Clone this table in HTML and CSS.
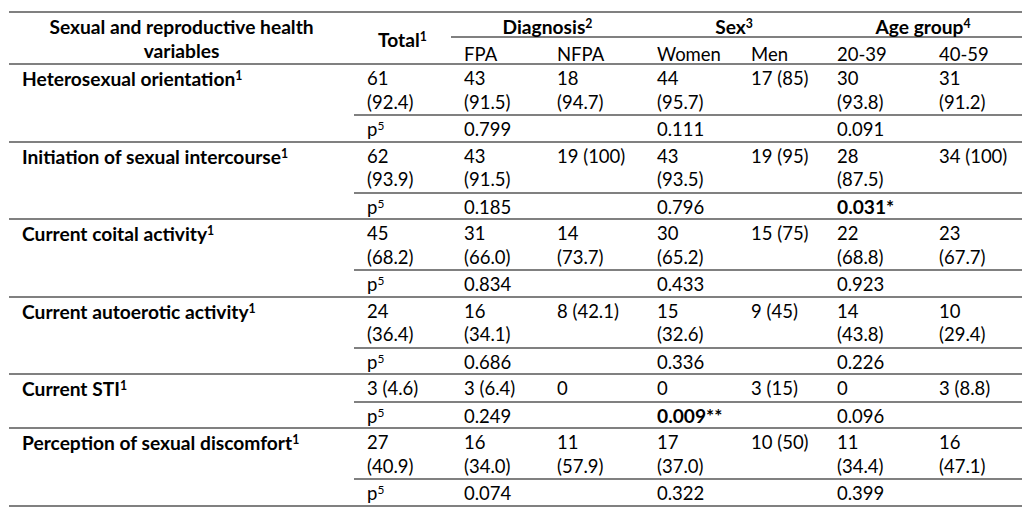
FILE: index.html
```html
<!DOCTYPE html>
<html>
<head>
<meta charset="utf-8">
<link rel="stylesheet" href="styles.css">
</head>
<body>
<table class="tbl">
  <colgroup>
    <col class="c-var">
    <col class="c-total">
    <col class="c-fpa">
    <col class="c-nfpa">
    <col class="c-women">
    <col class="c-men">
    <col class="c-young">
    <col class="c-old">
  </colgroup>
  <thead>
    <tr class="h1">
      <th rowspan="2" class="h-var">Sexual and reproductive health<br>variables</th>
      <th rowspan="2" class="h-total">Total<sup>1</sup></th>
      <th colspan="2" class="h-group">Diagnosis<sup>2</sup></th>
      <th colspan="2" class="h-group">Sex<sup>3</sup></th>
      <th colspan="2" class="h-group">Age group<sup>4</sup></th>
    </tr>
    <tr class="h2">
      <th>FPA</th><th>NFPA</th><th>Women</th><th>Men</th><th>20-39</th><th>40-59</th>
    </tr>
  </thead>
  <tbody>
    <tr class="main">
      <td rowspan="2" class="var">Heterosexual orientation<sup>1</sup></td>
      <td>61<br>(92.4)</td><td>43<br>(91.5)</td><td>18<br>(94.7)</td><td>44<br>(95.7)</td><td>17 (85)</td><td>30<br>(93.8)</td><td>31<br>(91.2)</td>
    </tr>
    <tr class="prow">
      <td>p<sup>5</sup></td><td>0.799</td><td></td><td>0.111</td><td></td><td>0.091</td><td></td>
    </tr>
    <tr class="main">
      <td rowspan="2" class="var">Initiation of sexual intercourse<sup>1</sup></td>
      <td>62<br>(93.9)</td><td>43<br>(91.5)</td><td>19 (100)</td><td>43<br>(93.5)</td><td>19 (95)</td><td>28<br>(87.5)</td><td>34 (100)</td>
    </tr>
    <tr class="prow">
      <td>p<sup>5</sup></td><td>0.185</td><td></td><td>0.796</td><td></td><td><b>0.031*</b></td><td></td>
    </tr>
    <tr class="main">
      <td rowspan="2" class="var">Current coital activity<sup>1</sup></td>
      <td>45<br>(68.2)</td><td>31<br>(66.0)</td><td>14<br>(73.7)</td><td>30<br>(65.2)</td><td>15 (75)</td><td>22<br>(68.8)</td><td>23<br>(67.7)</td>
    </tr>
    <tr class="prow">
      <td>p<sup>5</sup></td><td>0.834</td><td></td><td>0.433</td><td></td><td>0.923</td><td></td>
    </tr>
    <tr class="main">
      <td rowspan="2" class="var">Current autoerotic activity<sup>1</sup></td>
      <td>24<br>(36.4)</td><td>16<br>(34.1)</td><td>8 (42.1)</td><td>15<br>(32.6)</td><td>9 (45)</td><td>14<br>(43.8)</td><td>10<br>(29.4)</td>
    </tr>
    <tr class="prow">
      <td>p<sup>5</sup></td><td>0.686</td><td></td><td>0.336</td><td></td><td>0.226</td><td></td>
    </tr>
    <tr class="main">
      <td rowspan="2" class="var">Current STI<sup>1</sup></td>
      <td>3 (4.6)</td><td>3 (6.4)</td><td>0</td><td>0</td><td>3 (15)</td><td>0</td><td>3 (8.8)</td>
    </tr>
    <tr class="prow">
      <td>p<sup>5</sup></td><td>0.249</td><td></td><td><b>0.009**</b></td><td></td><td>0.096</td><td></td>
    </tr>
    <tr class="main">
      <td rowspan="2" class="var">Perception of sexual discomfort<sup>1</sup></td>
      <td>27<br>(40.9)</td><td>16<br>(34.0)</td><td>11<br>(57.9)</td><td>17<br>(37.0)</td><td>10 (50)</td><td>11<br>(34.4)</td><td>16<br>(47.1)</td>
    </tr>
    <tr class="prow">
      <td>p<sup>5</sup></td><td>0.074</td><td></td><td>0.322</td><td></td><td>0.399</td><td></td>
    </tr>
  </tbody>
</table>
</body>
</html>
```

FILE: styles.css
```css
html, body {
  margin: 0;
  padding: 0;
  background: #ffffff;
}

body {
  font-family: Lato, "Liberation Sans", sans-serif;
  font-size: 18.5px;
  color: #000000;
}

.tbl {
  margin: 11px 0 0 9px;
  width: 1013px;
  table-layout: fixed;
  border-collapse: collapse;
  border-top: 2px solid #808080;
  border-bottom: 2px solid #808080;
}

.c-var { width: 345px; }
.c-total { width: 97px; }
.c-fpa { width: 93px; }
.c-nfpa { width: 100px; }
.c-women { width: 94px; }
.c-men { width: 86px; }
.c-young { width: 102px; }
.c-old { width: 96px; }

th, td {
  padding: 0 0 0 13px;
  line-height: 24.5px;
  vertical-align: top;
  text-align: left;
  white-space: nowrap;
}

th {
  font-weight: bold;
  font-size: 19.2px;
}

.var,
b {
  font-weight: bold;
  font-size: 19.2px;
}

sup {
  font-size: 0.64em;
  line-height: 0;
  vertical-align: 0.48em;
}

.h1 th {
  height: 19px;
  padding-top: 4px;
  line-height: 19px;
}

.h1 .h-var {
  text-align: center;
  height: 48px;
  padding: 2px 0 0 0;
  line-height: 24px;
  vertical-align: top;
}

.h1 .h-total {
  text-align: center;
  height: 46px;
  padding: 4px 0 0 0;
  line-height: 24px;
  vertical-align: middle;
}

.h1 .h-group {
  text-align: center;
  padding-left: 0;
  border-bottom: 2px solid #808080;
}

.h2 th {
  font-weight: normal;
  font-size: 18.5px;
  height: 18px;
  padding-top: 7px;
  line-height: 18px;
}

.main td,
.prow td {
  border-top: 2px solid #808080;
  padding-top: 2px;
}

.main td {
  line-height: 23.5px;
}

.prow td {
  line-height: 22.5px;
}
```
